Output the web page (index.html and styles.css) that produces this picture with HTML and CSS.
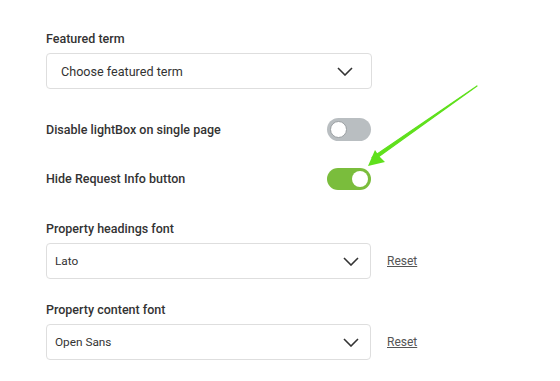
FILE: index.html
```html
<!DOCTYPE html>
<html>
<head>
<meta charset="utf-8">
<link rel="stylesheet" href="styles.css">
</head>
<body>
<div class="form">
  <div class="field">
    <div class="label">Featured term</div>
    <div class="select select-lg">
      <span>Choose featured term</span>
      <svg class="chev" width="16" height="9" viewBox="0 0 16 9"><path d="M1 1 L8 8 L15 1" fill="none" stroke="#333" stroke-width="1.6"/></svg>
    </div>
  </div>
  <div class="toggle-row row1">
    <div class="label">Disable lightBox on single page</div>
    <div class="toggle off"><span class="knob"></span></div>
  </div>
  <div class="toggle-row row2">
    <div class="label">Hide Request Info button</div>
    <div class="toggle on"><span class="knob"></span></div>
  </div>
  <div class="field field3">
    <div class="label">Property headings font</div>
    <div class="select-line">
      <div class="select select-sm">
        <span>Lato</span>
        <svg class="chev" width="16" height="9" viewBox="0 0 16 9"><path d="M1 1 L8 8 L15 1" fill="none" stroke="#333" stroke-width="1.6"/></svg>
      </div>
      <a class="reset" href="#">Reset</a>
    </div>
  </div>
  <div class="field field4">
    <div class="label">Property content font</div>
    <div class="select-line">
      <div class="select select-sm">
        <span>Open Sans</span>
        <svg class="chev" width="16" height="9" viewBox="0 0 16 9"><path d="M1 1 L8 8 L15 1" fill="none" stroke="#333" stroke-width="1.6"/></svg>
      </div>
      <a class="reset" href="#">Reset</a>
    </div>
  </div>
</div>
<svg class="arrow" width="560" height="381" viewBox="0 0 560 381">
  <path d="M477 86 L374 160 L372 157.5 Z" fill="#5fe01c" stroke="#5fe01c" stroke-width="1.2" stroke-linejoin="round"/>
  <path d="M368 166 L375 150 L379 156 L385 162 Z" fill="#5fe01c"/>
</svg>
</body>
</html>
```
FILE: styles.css
```css
html, body {
  margin: 0;
  padding: 0;
  background: #fff;
}
body {
  font-family: Roboto, "Liberation Sans", sans-serif;
  color: #333;
  position: relative;
  width: 560px;
  height: 381px;
  overflow: hidden;
}
.form {
  display: flex;
  flex-direction: column;
  margin-left: 46px;
  padding-top: 31px;
  width: 372px;
}
.label {
  font-size: 12.5px;
  font-weight: 500;
  line-height: 16px;
  color: #333;
}
.field .label {
  margin-bottom: 6px;
}
.select {
  box-sizing: border-box;
  height: 36px;
  border: 1px solid #dedede;
  border-radius: 4px;
  display: flex;
  align-items: center;
  justify-content: space-between;
  color: #333;
  background: #fff;
}
.select-lg {
  width: 326px;
  padding: 0 18px 0 14px;
  font-size: 12.6px;
}
.select-sm {
  width: 325px;
  padding: 0 11px 0 8px;
  font-size: 11.8px;
}
.chev {
  display: block;
}
.toggle-row {
  width: 326px;
  display: flex;
  align-items: center;
  justify-content: space-between;
}
.row1 {
  margin-top: 29px;
}
.row2 {
  margin-top: 27px;
}
.toggle {
  box-sizing: border-box;
  width: 44px;
  height: 23px;
  border-radius: 12px;
  position: relative;
  margin-right: 1px;
}
.toggle.off {
  background: #b9bec1;
}
.toggle.on {
  background: #7abd3c;
  height: 22px;
}
.knob {
  position: absolute;
  top: 3px;
  width: 16px;
  height: 16px;
  border-radius: 50%;
  background: #fff;
}
.off .knob {
  left: 3px;
  top: 3px;
  width: 15px;
  height: 15px;
  border: 1px solid #9a9fa2;
}
.on .knob {
  right: 3px;
}
.field3 {
  margin-top: 31px;
}
.field4 {
  margin-top: 23px;
}
.select-line {
  display: flex;
  align-items: center;
  gap: 16px;
}
.reset {
  font-size: 12px;
  color: #555;
  text-decoration: underline;
}
.arrow {
  position: absolute;
  left: 0;
  top: 0;
  pointer-events: none;
}
```
